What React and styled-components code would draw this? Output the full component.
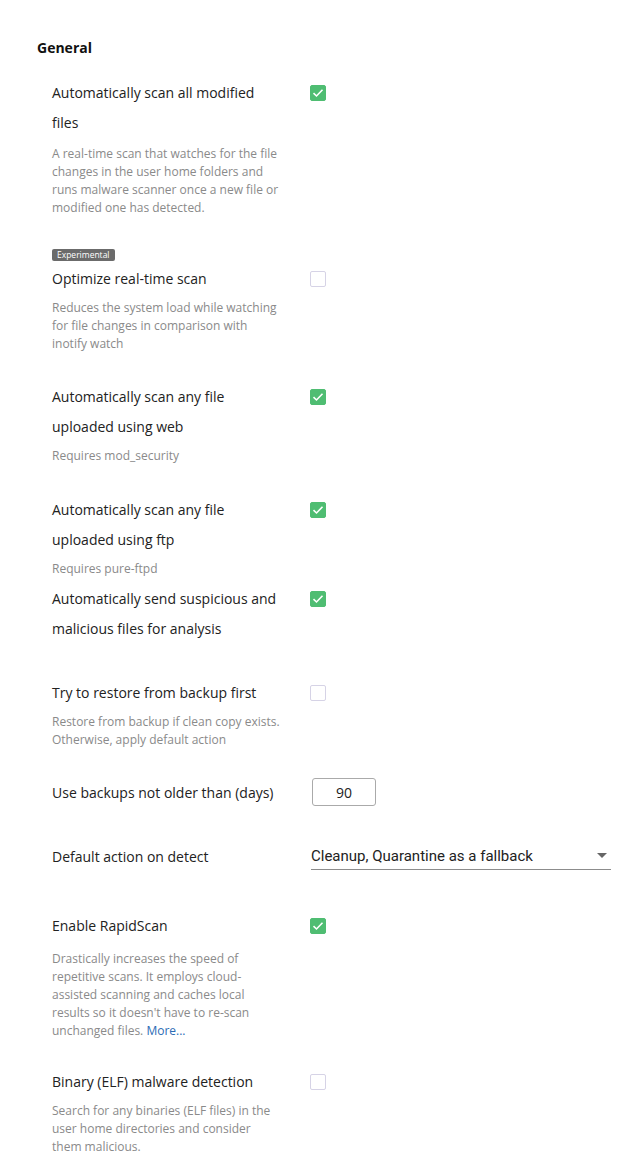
import React from "react";
import styled, { createGlobalStyle } from "styled-components";

const Global = createGlobalStyle`
  body {
    margin: 0;
    background: #fff;
    font-family: "Open Sans", "Liberation Sans", sans-serif;
    color: #222;
  }
`;

const settings = [
  {
    gap: 20,
    title: "Automatically scan all modified files",
    desc: "A real-time scan that watches for the file changes in the user home folders and runs malware scanner once a new file or modified one has detected.",
    descGap: 7,
    checked: true,
  },
  {
    gap: 32,
    badge: "Experimental",
    title: "Optimize real-time scan",
    desc: "Reduces the system load while watching for file changes in comparison with inotify watch",
    checked: false,
  },
  {
    gap: 29,
    title: "Automatically scan any file uploaded using web",
    desc: "Requires mod_security",
    checked: true,
  },
  {
    gap: 30,
    title: "Automatically scan any file uploaded using ftp",
    desc: "Requires pure-ftpd",
    checked: true,
  },
  {
    gap: 6,
    title: "Automatically send suspicious and malicious files for analysis",
    checked: true,
  },
  {
    gap: 34,
    title: "Try to restore from backup first",
    desc: "Restore from backup if clean copy exists. Otherwise, apply default action",
    checked: false,
  },
];

const Check = ({ checked }) => (
  <Box $checked={checked}>
    {checked && (
      <svg width="12" height="10" viewBox="0 0 12 10">
        <path d="M1.5 5.2 L4.5 8 L10.5 1.8" fill="none" stroke="#fff" strokeWidth="1.6" />
      </svg>
    )}
  </Box>
);

const Setting = ({ s }) => (
  <Item $gap={s.gap}>
    {s.badge && <Badge>{s.badge}</Badge>}
    <Row>
      <Label>
        <Title>{s.title}</Title>
        {s.desc && <Desc $mt={s.descGap}>{s.desc}</Desc>}
      </Label>
      <Check checked={s.checked} />
    </Row>
  </Item>
);

const App = () => {
  return (
    <>
      <Global />
      <Page>
        <Heading>General</Heading>
        {settings.map((s, i) => (
          <Setting key={i} s={s} />
        ))}

        <FieldRow $gap={28}>
          <FieldLabel>Use backups not older than (days)</FieldLabel>
          <NumberBox>90</NumberBox>
        </FieldRow>

        <FieldRow $gap={34}>
          <FieldLabel>Default action on detect</FieldLabel>
          <Select>
            <span>Cleanup, Quarantine as a fallback</span>
            <Arrow />
          </Select>
        </FieldRow>

        <Item $gap={40}>
          <Row>
            <Label>
              <Title>Enable RapidScan</Title>
              <Desc $mt={9}>
                Drastically increases the speed of repetitive scans. It employs
                cloud-assisted scanning and caches local results so it doesn't
                have to re-scan unchanged files. <Link>More...</Link>
              </Desc>
            </Label>
            <Check checked />
          </Row>
        </Item>

        <Item $gap={27}>
          <Row>
            <Label>
              <Title>Binary (ELF) malware detection</Title>
              <Desc $mt={5}>
                Search for any binaries (ELF files) in the user home directories
                and consider them malicious.
              </Desc>
            </Label>
            <Check checked={false} />
          </Row>
        </Item>
      </Page>
    </>
  );
};

export default App;

const Page = styled.div`
  padding: 38px 0 20px 37px;
`;

const Heading = styled.h3`
  margin: 0;
  font-size: 14px;
  line-height: 20px;
  font-weight: 700;
  color: #111;
`;

const Item = styled.div`
  margin-top: ${(p) => p.$gap}px;
  padding-left: 15px;
`;

const Row = styled.div`
  display: flex;
  align-items: flex-start;
`;

const Label = styled.div`
  width: 229px;
  margin-right: 29px;
`;

const Title = styled.div`
  font-size: 14px;
  line-height: 30px;
  color: #222;
`;

const Desc = styled.div`
  margin-top: ${(p) => (p.$mt != null ? p.$mt : 5)}px;
  font-size: 12px;
  line-height: 18px;
  color: #8a8a8a;
`;

const Link = styled.span`
  color: #2b6cb5;
`;

const Badge = styled.div`
  width: fit-content;
  background: #6b6b6b;
  color: #fff;
  font-size: 8.5px;
  line-height: 12px;
  padding: 0 5px;
  border-radius: 2px;
  margin-bottom: 3px;
`;

const Box = styled.div`
  width: 16px;
  height: 16px;
  margin-top: 7px;
  box-sizing: border-box;
  border-radius: 2px;
  border: 1px solid ${(p) => (p.$checked ? "#4fbd72" : "#d6d3e6")};
  background: ${(p) => (p.$checked ? "#4fbd72" : "#fff")};
  display: flex;
  align-items: center;
  justify-content: center;
`;

const FieldRow = styled.div`
  margin-top: ${(p) => p.$gap}px;
  padding-left: 15px;
  display: flex;
  align-items: center;
  height: 30px;
`;

const FieldLabel = styled.div`
  width: 258px;
  flex-shrink: 0;
  font-size: 14px;
  color: #222;
`;

const NumberBox = styled.div`
  margin-left: 2px;
  width: 64px;
  height: 28px;
  box-sizing: border-box;
  border: 1px solid #aaa;
  border-radius: 3px;
  display: flex;
  align-items: center;
  justify-content: center;
  font-size: 14px;
  color: #222;
`;

const Select = styled.div`
  margin-left: 1px;
  width: 300px;
  height: 27px;
  box-sizing: border-box;
  border-bottom: 1px solid #8c8c8c;
  display: flex;
  align-items: center;
  justify-content: space-between;
  font-family: Roboto, "Liberation Sans", sans-serif;
  font-size: 15px;
  color: #222;
`;

const Arrow = styled.span`
  width: 0;
  height: 0;
  margin-right: 4px;
  border-left: 5px solid transparent;
  border-right: 5px solid transparent;
  border-top: 5px solid #666;
`;
